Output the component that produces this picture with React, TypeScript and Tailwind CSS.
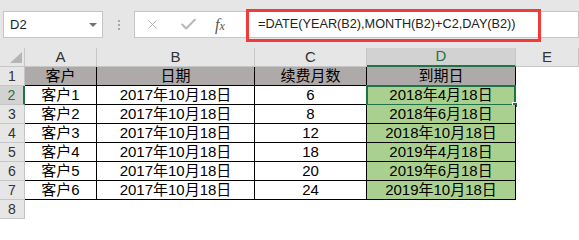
import { X, Check } from "lucide-react";

const font = "font-['Liberation_Sans','Noto_Sans_CJK_SC',sans-serif]";

const rows = [
  ["客户", "日期", "续费月数", "到期日"],
  ["客户1", "2017年10月18日", "6", "2018年4月18日"],
  ["客户2", "2017年10月18日", "8", "2018年6月18日"],
  ["客户3", "2017年10月18日", "12", "2018年10月18日"],
  ["客户4", "2017年10月18日", "18", "2019年4月18日"],
  ["客户5", "2017年10月18日", "20", "2019年6月18日"],
  ["客户6", "2017年10月18日", "24", "2019年10月18日"],
];

function Toolbar() {
  return (
    <div className="h-[48px] bg-[#e6e6e6] flex items-start pt-[11px]">
      {/* Name box */}
      <div className="ml-[3px] w-[100px] h-[27px] bg-white border border-[#c6c6c6] flex items-center pl-[6px] pr-[5px]">
        <span className="flex-1 text-[13px] text-[#222]">D2</span>
        <span className="w-0 h-0 border-l-[4px] border-r-[4px] border-t-[4px] border-l-transparent border-r-transparent border-t-[#707070]" />
      </div>
      {/* Splitter dots */}
      <div className="w-[31px] h-[27px] flex flex-col items-center justify-center gap-[2px]">
        <span className="w-[2px] h-[2px] bg-[#a8a8a8]" />
        <span className="w-[2px] h-[2px] bg-[#a8a8a8]" />
        <span className="w-[2px] h-[2px] bg-[#a8a8a8]" />
      </div>
      {/* Cancel / enter / fx */}
      <div className="w-[112px] h-[27px] bg-white border border-r-0 border-[#c6c6c6] flex items-center">
        <X className="ml-[10px] w-[15px] h-[15px] text-[#b3b3b3]" strokeWidth={1.6} />
        <Check className="ml-[19px] w-[19px] h-[19px] text-[#b8b8b8]" strokeWidth={2.6} />
        <span className="ml-[17px] font-['Liberation_Serif',serif] italic text-[#555] leading-none">
          <span className="text-[16px]">f</span>
          <span className="text-[12px]">x</span>
        </span>
      </div>
      {/* Formula input */}
      <div className="relative flex-1 h-[27px] bg-white border border-[#c6c6c6] flex items-center pl-[11px]">
        <span className="text-[12.7px] text-[#222] whitespace-nowrap">
          =DATE(YEAR(B2),MONTH(B2)+C2,DAY(B2))
        </span>
        <div className="absolute left-[-1px] top-[-3px] w-[295px] h-[33px] border-[3px] border-[#f33a3a]" />
      </div>
    </div>
  );
}

function Grid() {
  const cols = ["A", "B", "C", "D", "E"];
  return (
    <div className="grid grid-cols-[25px_72px_158px_112px_149px_1fr] auto-rows-[19px]">
      {/* Column header row */}
      <div className="relative bg-[#e6e6e6] border-r border-b border-[#c6c6c6]">
        <svg className="absolute right-[2px] bottom-[3px]" width="12" height="11" viewBox="0 0 12 11">
          <polygon points="12,0 12,11 0,11" fill="#b5b5b5" />
        </svg>
      </div>
      {cols.map((c) =>
        c === "D" ? (
          <div
            key={c}
            className="bg-[#d2d2d2] border-r border-[#c6c6c6] border-b-2 border-b-[#217346] flex items-center justify-center text-[15px] text-[#217346]"
          >
            {c}
          </div>
        ) : (
          <div
            key={c}
            className="bg-[#e6e6e6] border-r border-b border-[#c6c6c6] flex items-center justify-center text-[15px] text-[#333]"
          >
            {c}
          </div>
        )
      )}

      {/* Data rows */}
      {rows.map((r, i) => (
        <Row key={i} n={i + 1} cells={r} />
      ))}

      {/* Row 8 */}
      <div className="bg-[#e6e6e6] border-r border-b border-[#c6c6c6] flex items-center justify-center text-[14px] text-[#333]">
        8
      </div>
      <div className="col-span-5 bg-white" />
    </div>
  );
}

function Row({ n, cells }: { n: number; cells: string[] }) {
  const selected = n === 2;
  return (
    <>
      {selected ? (
        <div className="bg-[#d2d2d2] border-b border-[#c6c6c6] border-r-2 border-r-[#217346] flex items-center justify-center text-[14px] text-[#217346]">
          {n}
        </div>
      ) : (
        <div className="bg-[#e6e6e6] border-r border-b border-[#c6c6c6] flex items-center justify-center text-[14px] text-[#333]">
          {n}
        </div>
      )}
      {cells.map((t, j) => {
        const bg = n === 1 ? "bg-[#aeaaaa]" : j === 3 ? "bg-[#a9d08e]" : "bg-white";
        return (
          <div
            key={j}
            className={`relative ${bg} border-r border-b border-black flex items-center justify-center text-[15px] text-black whitespace-nowrap`}
          >
            {t}
            {selected && j === 3 && (
              <div className="absolute left-[-1px] top-[-1px] w-[150px] h-[21px] border-2 border-[#217346]">
                <span className="absolute right-[-4px] bottom-[-4px] w-[6px] h-[6px] bg-[#217346] border border-white" />
              </div>
            )}
          </div>
        );
      })}
      <div className="bg-white" />
    </>
  );
}

export default function App() {
  return (
    <div className={`w-[579px] h-[219px] overflow-hidden bg-white ${font}`}>
      <Toolbar />
      <Grid />
    </div>
  );
}
